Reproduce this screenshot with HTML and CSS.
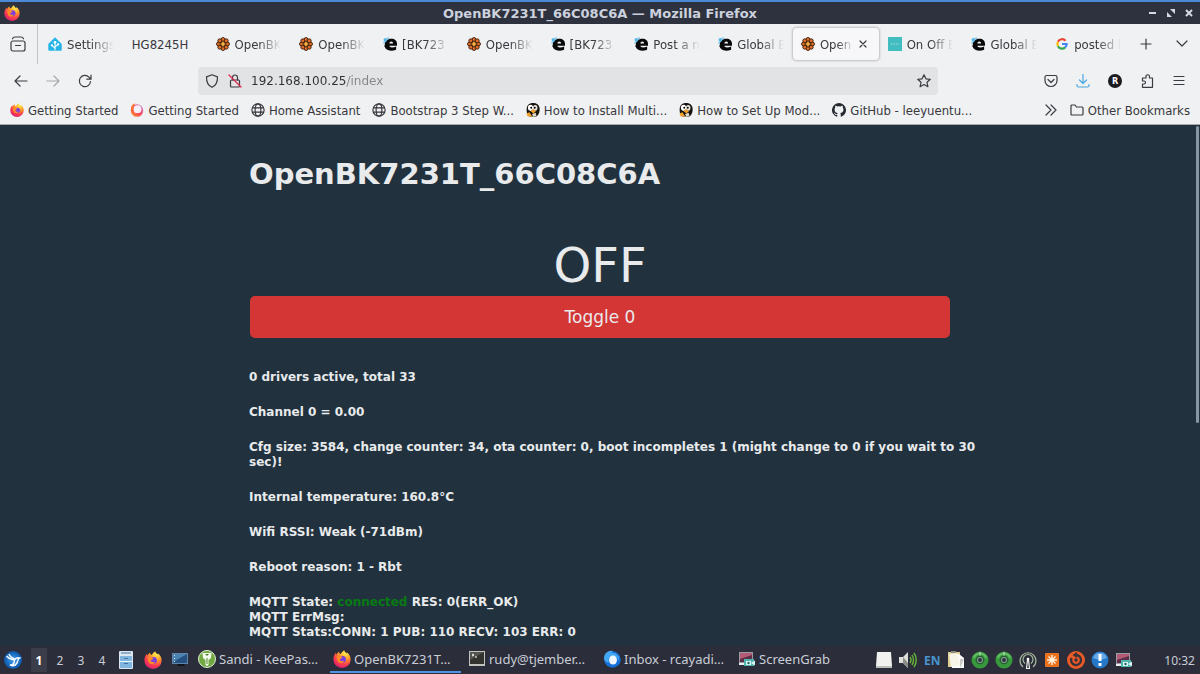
FILE: index.html
```html
<!DOCTYPE html>
<html lang="en">
<head>
    <meta charset="UTF-8">
    <meta name="viewport" content="width=device-width, initial-scale=1.0">
    <title>OpenBK7231T_66C08C6A</title>
    <link rel="stylesheet" href="styles.css">
</head>
<body>

<!-- Shared icons -->
<svg class="sprite" aria-hidden="true">
    <defs>
        <radialGradient id="fox-fill" cx="70%" cy="15%" r="90%">
            <stop offset="0" stop-color="#fff14f"/>
            <stop offset=".4" stop-color="#ff9a28"/>
            <stop offset=".75" stop-color="#fb3b50"/>
            <stop offset="1" stop-color="#d9206f"/>
        </radialGradient>
        <linearGradient id="ring-fill" x1="0" y1="1" x2="1" y2="0">
            <stop offset="0" stop-color="#ff9a28"/>
            <stop offset=".5" stop-color="#f5455c"/>
            <stop offset="1" stop-color="#c9a3f0"/>
        </linearGradient>
        <radialGradient id="bird-fill">
            <stop offset="0" stop-color="#3f9ff0"/>
            <stop offset="1" stop-color="#0b57a8"/>
        </radialGradient>
    </defs>
    <symbol id="firefox" viewBox="0 0 16 16">
        <path fill="url(#fox-fill)" d="M10 .3c.2 1.300 1.200 2 2 2.900.3-.2.300-.700.200-1.100C14.500 3.500 15.700 6 15.700 8.500A7.700 7.400 0 0 1 .3 8.500C.3 6 1.300 4 2.600 2.500c0 .8.200 1.300.5 1.600C3.500 3 4.300 2 5.400 1.300c0 1 .3 1.800 1.200 2.300C7.700 3 8 1.200 10 .3z"/>
        <circle cx="8.500" cy="8.300" r="3" fill="#7a3fe0"/>
        <path fill="#ff8a2a" d="M3.500 5.600c1.600-.6 3.200.1 4.900.7-.2 1.300-2 1.300-2.300 2.300.2 1.400 2.500 1.700 3.800.7C9.200 12 5.500 12.400 4.200 9.900 3.400 8.300 3.600 7 3.500 5.600z"/>
    </symbol>
    <symbol id="ring" viewBox="0 0 16 16">
        <circle cx="8" cy="8.500" r="7.200" fill="url(#ring-fill)"/>
        <circle cx="8.500" cy="7" r="4.500" fill="#f5effa"/>
        <path fill="#ff7a38" d="M1 5c1-3 3-4.500 5-4.500C4 3 3.500 6 4.500 10z"/>
    </symbol>
    <symbol id="chip" viewBox="0 0 16 16">
        <g fill="#e0702a" stroke="#43200c" stroke-width="1.100">
            <circle cx="8" cy="2.800" r="2.200"/><circle cx="8" cy="13.200" r="2.200"/>
            <circle cx="2.800" cy="8" r="2.200"/><circle cx="13.200" cy="8" r="2.200"/>
            <circle cx="4.300" cy="4.300" r="2.200"/><circle cx="11.700" cy="4.300" r="2.200"/>
            <circle cx="4.300" cy="11.700" r="2.200"/><circle cx="11.700" cy="11.700" r="2.200"/>
        </g>
        <circle cx="8" cy="8" r="2.800" fill="#c04a1c" stroke="#43200c"/>
        <path stroke="#f6cf4a" stroke-width="1.400" d="M8 5.500v5M5.500 8h5"/>
    </symbol>
    <symbol id="elektroda" viewBox="0 0 16 16">
        <path fill="#080808" fill-rule="evenodd" d="M9.500 2C13.500 2 16 4.300 16 7.800V10H7.300c.2 1.300 1.300 1.900 3 1.900 1.600 0 3.200-.3 4.700-1v3.600c-1.700.8-3.700 1.200-5.700 1.200C5 15.700 2 13.400 2 9.200 2 4.800 5 2 9.500 2zM7.200 7.300h4.300C11.500 6 10.800 5.100 9.500 5.100S7.400 6 7.200 7.300z"/>
        <path fill="#080808" d="M1 10h5v3H3.500z"/>
        <circle cx="2.800" cy="3.200" r="2.200" fill="#55b8e8"/>
        <circle cx="5.800" cy="1.500" r="1.200" fill="#7bcaf0"/>
        <circle cx="1.300" cy="6.500" r="1.100" fill="#7bcaf0"/>
    </symbol>
    <symbol id="globe" viewBox="0 0 16 16">
        <g fill="none" stroke="#34343a" stroke-width="1.300">
            <circle cx="8" cy="8" r="7"/><ellipse cx="8" cy="8" rx="3.300" ry="7"/>
            <path d="M1.600 5.600h12.800M1.600 10.400h12.800"/>
        </g>
    </symbol>
    <symbol id="penguin" viewBox="0 0 16 16">
        <path fill="#17130f" d="M1 5C2 1 5 0 8 0c4 0 7 2 7.500 6 .5 4-1 8-4 9.500H4C1 13 0 9 1 5z"/>
        <ellipse cx="5.200" cy="5.500" rx="3" ry="3.500" fill="#fff"/>
        <ellipse cx="10.500" cy="5.500" rx="2.600" ry="3.300" fill="#e9e5dd"/>
        <circle cx="6" cy="5.500" r="1.100"/><circle cx="10" cy="5.500" r="1.100"/>
        <path fill="#f2a02c" d="M5 9l3-2 3.500 2-3 3zM.5 12l3.500-1.500L7 15.500H2z"/>
        <path fill="#e5d8c4" d="M7 12.500l4-1.500 1 3.500-4 1z"/>
    </symbol>
    <symbol id="screengrab" viewBox="0 0 18 16">
        <path fill="#9a9ca4" d="M1 1h14v12H1z"/><path fill="#5d2c47" d="M2 2h12v9H2z"/>
        <path fill="#b35b76" d="M2 2h12v2L2 8z"/><path fill="#e9eef0" d="M1 12h6v2H1z"/>
        <path fill="#4fb3ae" d="M6 8h10v7H6z"/><path fill="#dff5f3" d="M8 10h5v4H8zM13 12l4-2.500v5z"/>
        <circle cx="10.500" cy="12" r="1.200" fill="#1b6661"/>
    </symbol>
    <symbol id="disc" viewBox="0 0 20 20">
        <circle cx="10" cy="10" r="9.500" fill="#36973d"/>
        <path fill="none" stroke="#66c069" stroke-width="2" d="M3 8a7.400 7.400 0 0 1 14 0"/>
        <circle cx="10" cy="10" r="4.800" fill="#235c2c"/><circle cx="10" cy="10" r="3.300" fill="#8fa39b"/>
        <circle cx="10" cy="10" r="2.200" fill="#26323b"/><path stroke="#dcefdc" d="M10 1v4"/>
    </symbol>
</svg>

<header class="titlebar">
    <svg class="icon-16"><use href="#firefox"/></svg>
    <span class="window-title">OpenBK7231T_66C08C6A — Mozilla Firefox</span>
    <div class="window-buttons">
        <button aria-label="Minimize"><svg viewBox="0 0 10 10"><path d="M1 5h7" stroke-width="2"/></svg></button>
        <button aria-label="Restore"><svg viewBox="0 0 10 10"><path d="M4 1h5v5zM1 4v5h5z" fill="#d3dae3" stroke="none"/></svg></button>
        <button aria-label="Close"><svg viewBox="0 0 10 10"><path d="m2 2 6 6m0-6L2 8" stroke-width="2"/></svg></button>
    </div>
</header>

<section class="browser-bars">
    <div class="tab-strip">
        <button class="tab-overview" aria-label="Firefox View">
            <svg class="icon-16 line" viewBox="0 0 16 16"><rect x="1" y="5" width="14" height="10" rx="2"/><path d="M2.500 2.800C3 1.300 3.500 1 5 1h6c1.500 0 2 .3 2.500 1.800M5.500 9.500h5"/></svg>
        </button>
        <nav class="tabs" aria-label="Tabs">
            <button class="tab">
                <svg class="icon-14" viewBox="0 0 16 16"><path fill="#27b5e8" d="M8 .3 15.700 8v6.500q0 1.200-1.200 1.200h-13Q.3 15.700.3 14.500V8z"/><path fill="none" stroke="#fff" stroke-width="1.200" d="M8 15V6.500M8 13 4.500 9.700M8 11.500l3.500-3"/><circle cx="8" cy="6" r="1.500" fill="#fff"/><circle cx="4.500" cy="9.500" r="1.300" fill="#fff"/><circle cx="11.500" cy="8.500" r="1.300" fill="#fff"/></svg>
                <span class="fade">Settings</span>
            </button>
            <button class="tab"><span>HG8245H</span></button>
            <button class="tab"><svg class="icon-14"><use href="#chip"/></svg><span class="fade">OpenBK</span></button>
            <button class="tab"><svg class="icon-14"><use href="#chip"/></svg><span class="fade">OpenBK</span></button>
            <button class="tab"><svg class="icon-14"><use href="#elektroda"/></svg><span class="fade">[BK723</span></button>
            <button class="tab"><svg class="icon-14"><use href="#chip"/></svg><span class="fade">OpenBK</span></button>
            <button class="tab"><svg class="icon-14"><use href="#elektroda"/></svg><span class="fade">[BK723</span></button>
            <button class="tab"><svg class="icon-14"><use href="#elektroda"/></svg><span class="fade">Post a n</span></button>
            <button class="tab"><svg class="icon-14"><use href="#elektroda"/></svg><span class="fade">Global E</span></button>
            <button class="tab active">
                <svg class="icon-14"><use href="#chip"/></svg><span class="fade">Open</span>
                <svg class="tab-close line" viewBox="0 0 8 8"><path d="m1 1 6 6m0-6L1 7"/></svg>
            </button>
            <button class="tab"><svg class="icon-14" viewBox="0 0 16 16"><path fill="#41bcc0" d="M0 0h16v16H0z"/><path stroke="#a6e2e3" stroke-dasharray="2 1" d="M3 8h10"/></svg><span class="fade">On Off E</span></button>
            <button class="tab"><svg class="icon-14"><use href="#elektroda"/></svg><span class="fade">Global E</span></button>
            <button class="tab">
                <svg class="icon-14" viewBox="0 0 16 16"><g fill="none" stroke-width="2.500"><path stroke="#ea4335" d="M3.400 5.400A5.300 5.300 0 0 1 12 4.200"/><path stroke="#fbbc05" d="M3.400 10.600a5.300 5.300 0 0 1 0-5.200"/><path stroke="#34a853" d="M11.600 11.900a5.300 5.300 0 0 1-8.200-1.300"/><path stroke="#4285f4" d="M8 8h5.300c0 1.600-.6 3-1.700 3.900"/></g></svg>
                <span class="fade">posted l</span>
            </button>
        </nav>
        <div class="tab-tools">
            <button aria-label="New tab"><svg class="icon-14 line" viewBox="0 0 14 14"><path d="M7 2v10M2 7h10"/></svg></button>
            <button aria-label="List all tabs"><svg class="icon-14 line" viewBox="0 0 14 14"><path d="m2 4 5 5 5-5"/></svg></button>
        </div>
    </div>

    <div class="nav-bar">
        <div class="nav-buttons">
            <button aria-label="Back"><svg class="icon-14 line" viewBox="0 0 14 14"><path d="M13 7H1m5-5L1 7l5 5"/></svg></button>
            <button aria-label="Forward" disabled><svg class="icon-14 line" viewBox="0 0 14 14"><path d="M1 7h12M8 2l5 5-5 5"/></svg></button>
            <button aria-label="Reload"><svg class="icon-14 line" viewBox="0 0 14 14"><path d="M12.500 7.500A5.600 5.600 0 1 1 11 3.200L12.800 5M13 1v4.200H8.800"/></svg></button>
        </div>
        <div class="url-bar">
            <svg class="icon-14 line" viewBox="0 0 14 14"><path d="m7 .8 5.500 2.100C12.600 7.500 11 11.500 7 13.300 3 11.500 1.400 7.500 1.500 2.900z"/></svg>
            <svg class="icon-14 line" viewBox="0 0 14 14"><rect x="2.500" y="6" width="9" height="7" rx="1"/><path d="M4.500 6V3.500a2.500 2.500 0 0 1 5 0V6"/><path class="slash" d="m1 1 12 12"/></svg>
            <input class="url" type="text" aria-label="Address" value="192.168.100.25/index">
            <button aria-label="Bookmark this page"><svg class="icon-14 line" viewBox="0 0 14 14"><path d="m7 .8 1.900 4 4.400.5L10 8.300l.9 4.400L7 10.500l-3.900 2.200.9-4.400L.7 5.300l4.400-.5z"/></svg></button>
        </div>
        <div class="nav-tools">
            <button aria-label="Pocket"><svg class="icon-14 line" viewBox="0 0 14 14"><path d="M2.500 1.500h9q1.500 0 1.500 1.500v3.500a6 6 0 0 1-12 0V3q0-1.500 1.500-1.500zM4 5.500l3 3 3-3"/></svg></button>
            <button class="download" aria-label="Downloads"><svg class="icon-14 line" viewBox="0 0 14 14"><path d="M7 .5V9M3.500 6 7 9.500 10.500 6M1 10.500v1q0 1.500 1.500 1.500h9q1.500 0 1.500-1.500v-1"/></svg></button>
            <button class="account" aria-label="Account">R</button>
            <button aria-label="Extensions"><svg class="icon-14 line" viewBox="0 0 14 14"><path d="M6 4V2.500a1.700 1.700 0 0 1 3.500 0V4h3v9.300h-10V10H4a1.500 1.500 0 0 0 0-3H2.500V4z"/></svg></button>
            <button aria-label="Menu"><svg class="icon-14 line" viewBox="0 0 14 14"><path d="M2 2.500h10M2 6.500h10M2 10.500h10"/></svg></button>
        </div>
    </div>

    <nav class="bookmarks" aria-label="Bookmarks">
        <a href="#"><svg class="icon-14"><use href="#firefox"/></svg>Getting Started</a>
        <a href="#"><svg class="icon-14"><use href="#ring"/></svg>Getting Started</a>
        <a href="#"><svg class="icon-14"><use href="#globe"/></svg>Home Assistant</a>
        <a href="#"><svg class="icon-14"><use href="#globe"/></svg>Bootstrap 3 Step W...</a>
        <a href="#"><svg class="icon-14"><use href="#penguin"/></svg>How to Install Multi...</a>
        <a href="#"><svg class="icon-14"><use href="#penguin"/></svg>How to Set Up Mod...</a>
        <a href="#"><svg class="icon-14" viewBox="0 0 16 16"><path fill="#24292f" d="M8 0a8 8 0 0 0-2.500 15.600c.4.100.5-.2.500-.4v-1.500c-2.200.5-2.700-.9-2.700-.9-.4-.9-.9-1.200-.9-1.200-.7-.5.100-.5.100-.5.800.1 1.200.8 1.200.8.700 1.300 1.900.9 2.300.7.100-.5.300-.9.500-1.100-1.800-.2-3.600-.9-3.600-4 0-.9.300-1.600.8-2.100-.1-.2-.4-1 .1-2.100 0 0 .7-.2 2.200.8a7.600 7.600 0 0 1 4 0c1.500-1 2.200-.8 2.200-.8.4 1.100.2 1.900.1 2.100.5.600.8 1.300.8 2.100 0 3.100-1.900 3.800-3.700 4 .3.300.6.800.6 1.500v2.200c0 .2.100.5.500.4A8 8 0 0 0 8 0z"/></svg>GitHub - leeyuentu...</a>
        <button class="more" aria-label="More bookmarks"><svg class="icon-14 line" viewBox="0 0 14 14"><path d="m2 2 5 5-5 5M7 2l5 5-5 5"/></svg></button>
        <a href="#"><svg class="icon-14 line" viewBox="0 0 14 14"><path d="M1 3q0-1 1-1h3l1.500 2H12q1 0 1 1v6q0 1-1 1H2q-1 0-1-1z"/></svg>Other Bookmarks</a>
    </nav>
</section>

<main class="page">
    <div class="content">
        <h1>OpenBK7231T_66C08C6A</h1>
        <div class="state">OFF</div>
        <button class="toggle">Toggle 0</button>
        <div class="info">
            <h5>0 drivers active, total 33</h5>
            <h5>Channel 0 = 0.00</h5>
            <h5>Cfg size: 3584, change counter: 34, ota counter: 0, boot incompletes 1 (might change to 0 if you wait to 30 sec)!</h5>
            <h5>Internal temperature: 160.8°C</h5>
            <h5>Wifi RSSI: Weak (-71dBm)</h5>
            <h5>Reboot reason: 1 - Rbt</h5>
            <h5>MQTT State: <span class="connected">connected</span> RES: 0(ERR_OK)<br>MQTT ErrMsg:<br>MQTT Stats:CONN: 1 PUB: 110 RECV: 103 ERR: 0</h5>
        </div>
    </div>
    <div class="scroll-thumb"></div>
</main>

<footer class="taskbar">
    <button class="start" aria-label="Applications"><svg class="icon-18" viewBox="0 0 18 18"><circle cx="9" cy="9" r="9" fill="url(#bird-fill)"/><path fill="none" stroke="#f2f8ff" stroke-width="1.500" d="M2.500 5c2 3 5 3 8 4M5 3c1 3 3 4 6 5M10.500 9c1-2 3-2.500 5-2-2 1-1.500 3-2.500 5-1.500 2.500-4.500 3-7 2 3 0 4.500-2 4.500-5z"/></svg></button>
    <div class="workspaces">
        <button class="current">1</button><button>2</button><button>3</button><button>4</button>
    </div>
    <div class="launchers">
        <button aria-label="Files"><svg class="icon-18" viewBox="0 0 18 18"><rect x="2" y="0" width="14" height="18" rx="1" fill="#dce7ef"/><path fill="#7fb5df" d="M3 5h12v12H3z"/><path stroke="#e9f4fb" d="M3 10.500h12"/><path stroke="#4276a8" d="M7 7.500h4m-4 5h4M4 2h10"/></svg></button>
        <button aria-label="Firefox"><svg class="icon-18"><use href="#firefox"/></svg></button>
        <button aria-label="Show desktop"><svg class="icon-18" viewBox="0 0 18 18"><path fill="#5f86aa" d="M1 2h16v11H1z"/><path fill="#245180" d="M2 3h14v9H2z"/><path fill="#4d83b3" d="M2 3h14L2 11z"/><path stroke="#c8dff0" stroke-dasharray="1 2" d="M3.500 4v7"/><path fill="#10151b" d="M7 13h6l1 2H6z"/></svg></button>
    </div>
    <nav class="tasks" aria-label="Windows">
        <button><svg class="icon-18" viewBox="0 0 18 18"><circle cx="9" cy="9" r="8.500" fill="#70a842" stroke="#e1efd5"/><path fill="#f4fbef" d="M4.500 3h9L13 8l-2.500 2v5L9 16l-1.500-1v-5L5 8z"/><path fill="#4c8027" d="M7 4h4L9 6zM8.500 8h1v6h-1z"/></svg><span>Sandi - KeePas…</span></button>
        <button class="current"><svg class="icon-18"><use href="#firefox"/></svg><span>OpenBK7231T…</span></button>
        <button><svg class="icon-18" viewBox="0 0 18 18"><path fill="#c1c1bd" d="M1 1h16v15H1z"/><path fill="#32332f" d="M2 2h14v12H2z"/><path fill="#555652" d="M2 2h14L2 10z"/><path fill="none" stroke="#fff" d="m4 4 2 1-2 1m3 1h2"/></svg><span>rudy@tjember…</span></button>
        <button><svg class="icon-18" viewBox="0 0 18 18"><circle cx="9.500" cy="9.500" r="8.300" fill="#166fd5"/><path fill="#43a7f3" d="M1 8C1 4 5 0 10 1l-2 2c5-1 9 3 8 8-1-3-3-5-6-5-4 0-5 4-4 7C3 12 1 11 1 8z"/><ellipse cx="10" cy="10" rx="4" ry="4.500" fill="#eef7ff"/></svg><span>Inbox - rcayadi…</span></button>
        <button><svg class="icon-18"><use href="#screengrab"/></svg><span>ScreenGrab</span></button>
    </nav>
    <div class="tray">
        <svg class="icon-18" viewBox="0 0 18 18"><path fill="#f1f1ef" d="M2 1h14l1 14H1z"/><path fill="#bdbdb9" d="M1 15h16v2H1z"/></svg>
        <svg class="icon-18" viewBox="0 0 18 18"><path fill="#deddd9" d="M0 6h4l5-5v16l-5-5H0z"/><path fill="#8b8b88" d="M4 6v6l5 5v-5z"/><path fill="none" stroke="#68b43a" stroke-width="1.400" d="M11 6q2 3 0 6m2-8q3 5 0 10m2-12q4.500 7 0 14"/></svg>
        <span class="lang">EN</span>
        <svg class="icon-18" viewBox="0 0 18 18"><path fill="#dfcf91" d="M1 1h12v15H1z"/><path fill="#fafafa" d="M5 3h7l5 4v10H5z"/><path fill="#f7f5e8" d="m2 3 8-1 3 12-9 2z"/><path fill="#8b8b80" d="M4 0h5v2H4z"/><path fill="#c9c9c5" d="M13 8h4l-4 9z"/></svg>
        <svg class="icon-18"><use href="#disc"/></svg>
        <svg class="icon-18"><use href="#disc"/></svg>
        <svg class="icon-18" viewBox="0 0 18 18"><g fill="none" stroke="#a9bda0" stroke-width="1.200"><path d="M4 16A8 8 0 1 1 14 16M6 12.500a5 5 0 1 1 6 0"/><path stroke="#eef3ea" d="M8.500 9 7.500 17.500h3L9.500 9"/></g><circle cx="9" cy="8" r="1.300" fill="#fff"/></svg>
        <svg class="icon-18" viewBox="0 0 18 18"><rect x="2" y="2" width="14" height="14" rx="1" fill="#e9721e"/><path stroke="#fff3dc" stroke-width="1.400" d="M9 4v10M4 9h10M5.500 5.500l7 7m0-7-7 7"/></svg>
        <svg class="icon-18" viewBox="0 0 18 18"><circle cx="9" cy="9" r="9" fill="#e85b26"/><path fill="none" stroke="#35303a" stroke-width="2.300" d="M4.500 7A5 5 0 1 0 9 4"/><path fill="#35303a" d="M10 1v6L5.500 4z"/><circle cx="9" cy="9" r="1.700" fill="#35303a"/></svg>
        <svg class="icon-18" viewBox="0 0 18 18"><circle cx="9" cy="9" r="8.500" fill="#2478c9"/><path fill="#67a8e5" d="M2 7a7.300 7.300 0 0 1 14 0q-7 3-14 0z"/><path stroke="#fff" stroke-width="3" d="M9 3v7m0 2v3"/></svg>
        <svg class="icon-18"><use href="#screengrab"/></svg>
    </div>
    <time class="clock">10:32</time>
</footer>

</body>
</html>
```

FILE: styles.css
```css
* {
    box-sizing: border-box;
}

body {
    display: flex;
    flex-direction: column;
    height: 100vh;
    margin: 0;
    overflow: hidden;
    background: #21323e;
    font-family: "DejaVu Sans", Verdana, sans-serif;
    font-size: 12px;
}

button {
    display: flex;
    align-items: center;
    justify-content: center;
    padding: 0;
    border: none;
    background: none;
    color: inherit;
    font: inherit;
}

svg {
    flex: none;
}

.sprite {
    position: absolute;
    width: 0;
    height: 0;
}

.icon-14 {
    width: 14px;
    height: 14px;
}

.icon-16 {
    width: 16px;
    height: 16px;
}

.icon-18 {
    width: 18px;
    height: 18px;
}

.line {
    fill: none;
    stroke: #3b3b41;
    stroke-width: 1.2;
    stroke-linecap: round;
    stroke-linejoin: round;
}

/* Window title */
.titlebar {
    display: flex;
    align-items: center;
    flex: none;
    height: 24px;
    padding: 0 6px 0 4px;
    border-top: 2px solid #4a8ad6;
    background: #2e323e;
    color: #cbd1dd;
}

.window-title {
    flex: 1;
    padding-left: 32px;
    font-size: 13px;
    font-weight: bold;
    text-align: center;
}

.window-buttons {
    display: flex;
    gap: 8px;
}

.window-buttons svg {
    width: 10px;
    height: 10px;
    stroke: #d3dae3;
}

/* Firefox toolbars */
.browser-bars {
    flex: none;
    border-bottom: 1px solid #a5abb1;
    background: #f0f1f3;
    color: #38383d;
    font-family: "DejaVu Sans Condensed", "DejaVu Sans", sans-serif;
    font-size: 13px;
}

.tab-strip {
    display: flex;
    height: 40px;
}

.tab-overview {
    width: 38px;
    margin-right: 1px;
    padding-right: 2px;
    border-right: 1px solid #c3c4c7;
}

.tabs {
    display: flex;
    flex: 1;
    min-width: 0;
    padding: 4px 0;
}

.tab {
    flex: 1;
    min-width: 0;
    justify-content: flex-start;
    gap: 5px;
    padding: 0 9px;
    white-space: nowrap;
}

.tab.active {
    padding: 0 12px 0 8px;
    border-radius: 4px;
    background: #f7f7f9;
    box-shadow: 0 0 3px #85858c;
}

.fade {
    flex: 1;
    overflow: hidden;
    text-align: left;
    mask-image: linear-gradient(to right, #000 50%, transparent);
}

.tab-close {
    width: 8px;
    height: 8px;
}

.tab-tools {
    display: flex;
    gap: 22px;
    padding: 0 11px 0 9px;
}

.nav-bar {
    display: flex;
    align-items: center;
    height: 34px;
    padding: 0 14px;
}

.nav-buttons,
.nav-tools {
    display: flex;
    gap: 18px;
}

.nav-buttons {
    margin-right: 106px;
}

.nav-tools {
    margin-left: 106px;
}

button:disabled {
    opacity: 0.4;
}

.url-bar {
    display: flex;
    flex: 1;
    align-items: center;
    gap: 9px;
    height: 28px;
    padding: 0 7px;
    border-radius: 4px;
    background: #e2e3e5;
}

/* Host is dark, the path after it is dimmed */
.url {
    flex: 1;
    min-width: 0;
    padding: 0;
    border: none;
    outline: none;
    background: linear-gradient(to right, #303035 96px, #85858a 96px);
    background-clip: text;
    color: transparent;
    font-family: "DejaVu Sans", sans-serif;
    font-size: 12px;
}

.slash {
    stroke: #e22850;
}

.download .line {
    stroke: #4aa8e0;
}

.account {
    width: 14px;
    height: 14px;
    border-radius: 50%;
    background: #1c1b20;
    color: #fff;
    font-size: 9px;
    font-weight: bold;
}

.bookmarks {
    display: flex;
    align-items: center;
    gap: 12px;
    height: 26px;
    padding: 0 10px 2px;
    white-space: nowrap;
}

.bookmarks a {
    display: flex;
    align-items: center;
    gap: 4px;
    color: inherit;
    text-decoration: none;
}

.more {
    margin-left: auto;
}

/* Device page */
.page {
    position: relative;
    flex: 1;
    min-height: 0;
    overflow: hidden;
    color: #e8eaec;
}

.content {
    max-width: 702px;
    margin: 0 auto;
}

h1 {
    margin: 32px 0 46px;
    font-size: 29px;
    line-height: 34px;
}

.state {
    margin-bottom: 3px;
    font-size: 48px;
    line-height: 56px;
    text-align: center;
}

.toggle {
    width: calc(100% - 2px);
    height: 42px;
    margin: 0 1px 32px;
    border-radius: 5px;
    background: #d43535;
    font-size: 17px;
}

/* Long status lines run slightly past the button */
.info {
    margin-right: -32px;
}

h5 {
    margin: 0 0 20px;
    font-size: 12px;
    line-height: 15px;
}

.connected {
    color: #087a12;
}

.scroll-thumb {
    position: absolute;
    top: 1px;
    right: 1px;
    width: 3px;
    height: 57%;
    border-radius: 2px;
    background: #8796a0;
}

/* Desktop panel */
.taskbar {
    display: flex;
    align-items: center;
    flex: none;
    height: 28px;
    padding: 0 5px 0 4px;
    background: #2b2e3a;
    color: #c9cdd6;
    font-family: "Noto Sans", "Open Sans", sans-serif;
    font-size: 12px;
}

.workspaces {
    display: flex;
    gap: 5px;
    margin-left: 9px;
}

.workspaces button {
    width: 16px;
    height: 24px;
}

.workspaces .current {
    background: #3b3e4a;
    color: #fff;
    font-weight: bold;
}

.launchers {
    display: flex;
    gap: 9px;
    margin: 0 6px 0 7px;
}

.tasks {
    display: flex;
    flex: 1;
    gap: 4px;
    min-width: 0;
}

.tasks button {
    flex: 0 1 131px;
    justify-content: flex-start;
    gap: 3px;
    min-width: 0;
    height: 26px;
    padding: 0 3px;
    border-bottom: 2px solid transparent;
    font-size: 13px;
    white-space: nowrap;
}

.tasks .current {
    border-color: #5294e2;
}

.tray {
    display: flex;
    align-items: center;
    gap: 6px;
    margin-right: 31px;
}

.lang {
    width: 18px;
    color: #4994ce;
    font-weight: bold;
    text-align: center;
}
```
